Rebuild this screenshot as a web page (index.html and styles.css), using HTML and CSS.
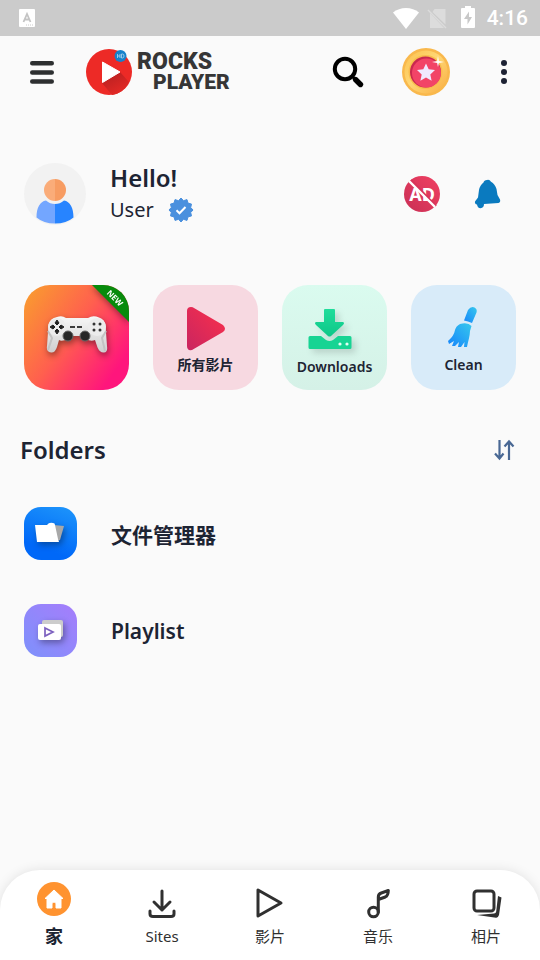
FILE: index.html
```html
<!DOCTYPE html>
<html lang="zh-CN">
<head>
<meta charset="utf-8">
<meta name="viewport" content="width=device-width, initial-scale=1">
<title>Rocks Player</title>
<link rel="stylesheet" href="styles.css">
</head>
<body>
<div class="status">
  <svg class="status-app" width="16" height="18" viewBox="0 0 16 18" aria-hidden="true">
    <rect width="16" height="18" rx="1" fill="#fff"/>
    <path d="M4.500 13 8 5l3.500 8M5.500 10.500h5" fill="none" stroke="#c4c4c4" stroke-width="1.800"/>
    <path d="M7 16h8" stroke="#ccc" stroke-width="1" stroke-dasharray="1 1"/>
  </svg>
  <svg class="wifi" width="26" height="21" viewBox="0 0 26 21" aria-hidden="true"><path d="M0 4.500C7-1.500 19-1.500 26 4.500L13 21Z" fill="#fff"/></svg>
  <svg class="sim" width="20" height="21" viewBox="0 0 20 21" aria-hidden="true"><path d="M3 5v15h14zM7.500 1H18.500v15.500L5.500 4Z" fill="#dcdcdc"/><path d="m1 2 18 18" stroke="#dcdcdc" stroke-width="1.500"/></svg>
  <svg class="battery" width="14" height="22" viewBox="0 0 14 22" aria-hidden="true"><path d="M4 0h6v2h3q1 0 1 1v18q0 1-1 1H1q-1 0-1-1V3q0-1 1-1h3Z" fill="#fff"/><path d="M8 5.500 3 13h3.500v5.500L11 11H8Z" fill="#c8c8c8"/></svg>
  <span class="clock">4:16</span>
</div>

<header class="topbar">
  <button class="icon-btn" aria-label="Menu">
    <svg width="24" height="24" viewBox="0 0 24 24"><path d="M2.200 3.200h19.600M2.200 12.500h19.600M2.200 21.500h19.600" stroke="#2d2f30" stroke-width="4.400" stroke-linecap="round"/></svg>
  </button>
  <a class="brand" href="#" aria-label="Rocks Player">
    <svg width="46" height="46" viewBox="0 0 46 46">
      <defs><linearGradient id="shade" x1=".3" y1=".2" x2=".8" y2="1"><stop stop-color="#c02222"/><stop offset="1" stop-color="#e92a26"/></linearGradient></defs>
      <circle cx="23" cy="23" r="23" fill="#ed2a26"/>
      <path d="M34 23 43 33C39 41 33 45 26 46L16 34Z" fill="url(#shade)"/>
      <path d="M16.500 13v20.500L34 23Z" fill="#fff" stroke="#fff" stroke-width="1" stroke-linejoin="round"/>
      <circle cx="34.500" cy="7" r="6" fill="#1681ca"/>
      <path d="M31.500 5v4m0-2h2.500m0-2v4M35.500 5v4h1q1.500 0 1.500-2t-1.500-2z" fill="none" stroke="#b4d8ef" stroke-width=".8"/>
    </svg>
    <span class="wordmark"><span class="word-one">ROCKS</span><span class="word-two">PLAYER</span></span>
  </a>
  <div class="actions">
    <button class="icon-btn" aria-label="Search">
      <svg width="32" height="32" viewBox="0 0 32 32"><circle cx="13" cy="13" r="10.200" fill="none" stroke="#000" stroke-width="4"/><path d="m20 20 4 4" stroke="#000" stroke-width="2.500"/><path d="m23.500 23.500 5 5" stroke="#000" stroke-width="5.400" stroke-linecap="round"/></svg>
    </button>
    <button class="icon-btn" aria-label="Rewards">
      <svg width="48" height="48" viewBox="0 0 48 48">
        <defs><linearGradient id="gold" x2="1" y2="1"><stop stop-color="#fbc14e"/><stop offset=".45" stop-color="#ffd774"/><stop offset="1" stop-color="#f9ad43"/></linearGradient></defs>
        <circle cx="24" cy="24" r="24" fill="#f9b84c"/><circle cx="24" cy="24" r="21.500" fill="url(#gold)"/>
        <circle cx="23.500" cy="24" r="17" fill="#f8bc4d"/><circle cx="23.500" cy="24" r="15.500" fill="#c9284f"/><circle cx="24.500" cy="25" r="14.500" fill="#f24467"/>
        <path d="m24 15.500 2.700 5.800 6.300.8-4.700 4.300 1.300 6.400-5.600-3.200-5.600 3.200 1.300-6.400-4.700-4.300 6.300-.8Z" fill="#f0e9ff"/>
        <path d="m36 8 .9 5 5.100 1-5.100 1-.9 4-.9-4-5.100-1 5.100-1Z" fill="#fff"/>
      </svg>
    </button>
    <button class="icon-btn more" aria-label="More options">
      <svg width="24" height="26" viewBox="0 0 24 26"><g fill="#1d2233"><circle cx="12" cy="4" r="3"/><circle cx="12" cy="13" r="3"/><circle cx="12" cy="22" r="3"/></g></svg>
    </button>
  </div>
</header>

<main>
  <section class="profile">
    <svg class="avatar" width="62" height="62" viewBox="0 0 62 62" aria-hidden="true">
      <circle cx="31" cy="31" r="31" fill="#f2f2f2"/>
      <path d="M31 16a11 11 0 0 0 0 22Z" fill="#faac79"/><path d="M31 16a11 11 0 0 1 0 22Z" fill="#f79c62"/>
      <path d="M31 41q-5 0-9-3.500c-6 1-9.500 7-9.500 17q7 6 18.500 6Z" fill="#73a6ff"/>
      <path d="M31 41q5 0 9-3.500c6 1 9.500 7 9.500 17q-7 6-18.500 6Z" fill="#2784ff"/>
    </svg>
    <div class="greeting">
      <h1>Hello!</h1>
      <p>User
        <svg width="26" height="26" viewBox="0 0 26 26" aria-label="Verified">
          <path d="m13 1 2.500 2.700 3.500-1.100 1 3.500 3.500 1-.8 3.400L25 13l-2.300 2.500.8 3.400-3.500 1-1 3.500-3.500-1.100L13 25l-2.500-2.700-3.500 1.100-1-3.500-3.500-1 .8-3.400L1 13l2.300-2.500-.8-3.400 3.500-1 1-3.500 3.500 1.100Z" fill="#4a90de" stroke="#4a90de" stroke-linejoin="round"/>
          <path d="m8.500 13.300 3 3 6-6.300" fill="none" stroke="#fff" stroke-width="2"/>
        </svg>
      </p>
    </div>
    <div class="profile-actions">
      <button class="icon-btn" aria-label="Remove ads">
        <svg width="36" height="36" viewBox="0 0 36 36">
          <defs><linearGradient id="ad" x1="1" x2="0" y2="1"><stop stop-color="#f04062"/><stop offset="1" stop-color="#c92f55"/></linearGradient></defs>
          <circle cx="18" cy="18" r="18" fill="url(#ad)"/>
          <text class="ad-text" x="18" y="25" text-anchor="middle">AD</text>
          <path d="m7 4 25 26" stroke="#d83359" stroke-width="2"/><path d="m5 5 26 26" stroke="#fff" stroke-width="2.400"/>
        </svg>
      </button>
      <button class="icon-btn" aria-label="Notifications">
        <svg width="28" height="30" viewBox="0 0 28 30"><path d="M13 1q2.500-.8 4 1.800Q21 5 22.500 10L23.500 16 26 20.500q.8 3-1.500 3.400L10 25q0 4-3.500 4.200Q3.500 29 3 25.500.5 25 1 22.500L4 18.500 5 11Q6 6 9.500 3.500 10 1 13 1Z" fill="#0a7abf"/></svg>
      </button>
    </div>
  </section>

  <nav class="cards" aria-label="Shortcuts">
    <a class="card games" href="#" aria-label="Games">
      <svg class="ribbon" width="37" height="37" viewBox="0 0 37 37" aria-hidden="true"><path d="M0 0h37v37Z" fill="#078b0c"/><text class="new-text" transform="translate(23 13) rotate(45)" text-anchor="middle" y="3">NEW</text></svg>
      <svg class="gamepad" width="64" height="44" viewBox="0 2 64 44" aria-hidden="true">
        <defs><linearGradient id="pad" x2="0" y2="1"><stop stop-color="#f7f7f7"/><stop offset="1" stop-color="#cfcfcf"/></linearGradient></defs>
        <path d="M12 3q5-2 9 1h22q5-3 11-.5 6 2 6.500 8L62 32q1 6-3 6.500-4 .5-6.500-5L50 26q-4 2-9-1L37 22H26l-3 2.500Q17 28 14 26l-2 7q-2 6-6 5.500Q1 38 2 32L3.500 11Q5 4 12 3Z" fill="url(#pad)"/>
        <path d="m3 17 4 7-4 12m58-19-4 7 3 13" fill="none" stroke="#c3c3c3" stroke-width="2"/>
        <circle cx="12" cy="13" r="9" fill="#ececec"/><circle cx="52" cy="13" r="9" fill="#ececec"/>
        <path d="m12 6 2 3-2 2-2-2Zm0 14-2-3 2-2 2 2ZM5 13l3-2 2 2-2 2Zm14 0-3 2-2-2 2-2Z" fill="#222" stroke="#222"/>
        <g fill="#333"><circle cx="49" cy="10" r="1.500"/><circle cx="55" cy="10" r="1.500"/><circle cx="49" cy="16" r="1.500"/><circle cx="55" cy="16" r="1.500"/></g>
        <path d="M25 13h5m2 0h5" stroke="#3c3c3c" stroke-width="1.800"/>
        <g fill="#272727" stroke="#656565"><circle cx="23" cy="22" r="5"/><circle cx="40" cy="22" r="5"/></g>
      </svg>
    </a>
    <a class="card videos" href="#">
      <svg width="48" height="48" viewBox="0 0 48 48" aria-hidden="true"><defs><linearGradient id="play" x1="1" x2="0" y2="1"><stop stop-color="#fb304b"/><stop offset="1" stop-color="#c92560"/></linearGradient></defs><path d="M9 2q-4 0-4 4v35q0 5 5 4l31-18q4-3 0-7L12 3Q11 2 9 2Z" fill="url(#play)"/></svg>
      <span>所有影片</span>
    </a>
    <a class="card downloads" href="#">
      <svg width="48" height="48" viewBox="4 0 48 48" aria-hidden="true"><defs><linearGradient id="down" x2="0" y2="1"><stop stop-color="#20dd9b"/><stop offset="1" stop-color="#0dc788"/></linearGradient></defs><path d="M18 2h9q1 0 1 1v12h8q2 1 0 3L24 29q-1.500 1-3 0L9 18q-2-2 0-3h8V3q0-1 1-1Z" fill="url(#down)"/><path d="M3 29h11l5 4q3.500 2 7 0l5-4h12q1.500 0 1.500 1.500v10q0 1.500-1.500 1.500H3q-1.500 0-1.500-1.500v-10Q1.500 29 3 29Z" fill="#17d493"/><g fill="#e4fff4"><circle cx="33" cy="37" r="1.600"/><circle cx="40" cy="37" r="1.600"/></g></svg>
      <span>Downloads</span>
    </a>
    <a class="card clean" href="#">
      <svg width="48" height="48" viewBox="0 0 48 48" aria-hidden="true"><defs><linearGradient id="broom" x1="1" x2="0" y2="1"><stop stop-color="#36c8ed"/><stop offset="1" stop-color="#1684fb"/></linearGradient></defs><path d="M28 5q3-4 6.500-2.500 3 1.500 2 5L32 18q-4-2-8-2.500Z" fill="url(#broom)"/><path d="M20 19q8-2 11.500 2l-1.500 5c0 5-2 10-3 16h-3l.5-5-3.500 5h-3l1-5-4 4h-3l2-5-5 3-1-3q6-5 7-11 1-4 5-6Z" fill="url(#broom)"/></svg>
      <span>Clean</span>
    </a>
  </nav>

  <section class="folders">
    <div class="section-head">
      <h2>Folders</h2>
      <button class="icon-btn" aria-label="Sort">
        <svg width="24" height="24" viewBox="0 0 24 24"><path d="M7.500 2v18M3 15.500l4.500 5 4-5M17 22V4M12.500 8.500 17 3.500l4.500 5" fill="none" stroke="#496894" stroke-width="2.200"/></svg>
      </button>
    </div>
    <ul>
      <li><a href="#">
        <span class="tile files"><svg width="32" height="24" viewBox="1 1 32 24" aria-hidden="true"><path d="m20 4 10 1-4 14-7 2Z" fill="#a8a8a8"/><path d="M1 4h12q2-3 6-2 2 0 2 2l3 14 1 3H3Z" fill="#fff"/></svg></span>
        <span class="name">文件管理器</span>
      </a></li>
      <li><a href="#">
        <span class="tile playlist"><svg width="32" height="24" viewBox="1 0 32 24" aria-hidden="true"><rect x="8" y="1" width="21" height="17" rx="2" fill="#ccc"/><rect x="4" y="5" width="23" height="16" rx="2" fill="#fff"/><path d="m11 9 8 4-8 4Z" fill="none" stroke="#7c60bf" stroke-width="1.700"/></svg></span>
        <span class="name">Playlist</span>
      </a></li>
    </ul>
  </section>
</main>

<nav class="tabs" aria-label="Main">
  <a class="active" href="#" aria-current="page"><svg width="36" height="36" viewBox="0 0 36 36" aria-hidden="true"><circle cx="18" cy="18" r="17" fill="#ff9330"/><path d="M18 9 9 17.500h2V27h5v-5q2-2 4 0v5h5V17.500h2Z" fill="#fff" stroke="#fff" stroke-linejoin="round"/></svg><span>家</span></a>
  <a href="#"><svg width="36" height="36" viewBox="0 0 36 36" aria-hidden="true"><path d="M18 10v19m-8-8 8 8 8-8M6 30v3q0 2.500 3 2.500h18q3 0 3-2.500v-3" class="line"/></svg><span>Sites</span></a>
  <a href="#"><svg width="36" height="36" viewBox="0 0 36 36" aria-hidden="true"><path d="M6 9v26l23-13Z" class="line"/></svg><span>影片</span></a>
  <a href="#"><svg width="36" height="36" viewBox="0 0 36 36" aria-hidden="true"><circle cx="13.500" cy="31" r="4.800" class="line"/><path d="M18.300 31V16q0-3 3-4l7-2.500q0 5-3 6.500l-7 2.500" class="line"/></svg><span>音乐</span></a>
  <a href="#"><svg width="36" height="36" viewBox="0 0 36 36" aria-hidden="true"><rect x="6" y="10" width="20" height="20" rx="3" class="line"/><path d="m30 15 3.500 1.500L31 34q-1 3-3 2.700L9 34l17-1.500q2 0 2.200-2Z" fill="#303030"/></svg><span>相片</span></a>
</nav>
</body>
</html>
```
FILE: styles.css
```css
* {
  box-sizing: border-box;
}

body {
  margin: 0;
  min-height: 100vh;
  display: flex;
  flex-direction: column;
  background: #fafafa;
  color: #1d2433;
  font-family: "Noto Sans", "Noto Sans CJK SC", sans-serif;
}

svg {
  display: block;
  flex: none;
  overflow: visible;
}

a {
  color: inherit;
  text-decoration: none;
}

h1, h2, p, ul {
  margin: 0;
  padding: 0;
}

.icon-btn {
  display: block;
  padding: 0;
  border: 0;
  background: none;
}

.status {
  display: flex;
  align-items: center;
  height: 36px;
  padding: 0 12px 0 19px;
  background: #cbcbcb;
}

.wifi {
  margin-left: auto;
}

.sim {
  margin-left: 8px;
}

.battery {
  margin: 0 12px 2px 14px;
}

.clock {
  color: #fff;
  font: 500 21px/36px Roboto, sans-serif;
}

.topbar {
  display: flex;
  align-items: center;
  height: 72px;
  padding: 0 24px 0 30px;
}

.brand {
  display: flex;
  align-items: center;
  gap: 5px;
  margin-left: 32px;
}

.wordmark {
  color: #363636;
  font-family: Roboto, sans-serif;
  font-weight: 900;
  line-height: 20px;
}

.wordmark span {
  display: block;
}

.word-one {
  font-size: 23px;
}

.word-two {
  padding-left: 16px;
  font-size: 21px;
}

.actions {
  display: flex;
  align-items: center;
  gap: 38px;
  margin-left: auto;
}

.more {
  margin-left: 4px;
}

.profile {
  display: flex;
  align-items: center;
  gap: 24px;
  padding: 54px 38px 59px 24px;
}

.greeting {
  line-height: 32px;
}

.greeting h1 {
  font-size: 24px;
  font-weight: 600;
}

.greeting p {
  display: flex;
  align-items: center;
  gap: 14px;
  font-size: 20px;
}

.profile-actions {
  display: flex;
  align-items: center;
  gap: 34px;
  margin-left: auto;
}

.ad-text {
  fill: #fff;
  font: 700 18px "Noto Sans", sans-serif;
}

.cards {
  display: grid;
  grid-template-columns: repeat(4, 1fr);
  gap: 24px;
  padding: 0 24px;
}

.card {
  position: relative;
  display: flex;
  flex-direction: column;
  align-items: center;
  aspect-ratio: 1;
  padding-top: 20px;
  border-radius: 26px;
  overflow: hidden;
  font-size: 14px;
  font-weight: 600;
  line-height: 24px;
}

.games {
  justify-content: center;
  padding-top: 0;
  background: linear-gradient(125deg, #f9a02d, #ff604e 45%, #ff157c 85%);
}

.ribbon {
  position: absolute;
  top: 0;
  right: 0;
  filter: drop-shadow(0 2px 3px #0006);
}

.new-text {
  fill: #fff;
  font: 700 8px "Noto Sans", sans-serif;
}

.gamepad {
  filter: drop-shadow(1px 3px 3px #0006);
}

.videos {
  background: #f7d9e1;
}

.downloads {
  padding-top: 22px;
  background: linear-gradient(#dafbef, #d5f1e7);
}

.downloads svg {
  filter: drop-shadow(4px 4px 3px #0002);
}

.clean {
  background: #d8ebf9;
}

.section-head {
  display: flex;
  align-items: center;
  justify-content: space-between;
  height: 40px;
  margin-top: 40px;
  padding: 0 24px 0 20px;
}

.section-head h2 {
  font-size: 24px;
  font-weight: 600;
  line-height: 32px;
}

.folders ul {
  display: grid;
  gap: 44px;
  padding: 37px 24px 32px;
  list-style: none;
}

.folders li a {
  display: flex;
  align-items: center;
  gap: 34px;
}

.tile {
  display: grid;
  place-items: center;
  width: 53px;
  height: 53px;
  border-radius: 17px;
}

.tile svg {
  filter: drop-shadow(2px 3px 3px #0005);
}

.files {
  background: linear-gradient(200deg, #1e96fb, #0068f8 75%);
}

.playlist {
  background: linear-gradient(225deg, #a67dfb, #7d91fb);
}

.name {
  font-size: 21px;
  font-weight: 600;
}

.tabs {
  display: grid;
  grid-template-columns: repeat(5, 1fr);
  height: 90px;
  margin-top: auto;
  border-radius: 40px 40px 0 0;
  background: #fff;
  box-shadow: 0 0 12px #0000001a;
}

.tabs a {
  display: flex;
  flex-direction: column;
  align-items: center;
  gap: 7px;
  padding-top: 11px;
  color: #303030;
  font-size: 15px;
  line-height: 24px;
}

.tabs .active {
  color: #1d2433;
  font-size: 18px;
  font-weight: 600;
}

.line {
  fill: none;
  stroke: #303030;
  stroke-width: 3px;
  stroke-linecap: round;
  stroke-linejoin: round;
}
```
